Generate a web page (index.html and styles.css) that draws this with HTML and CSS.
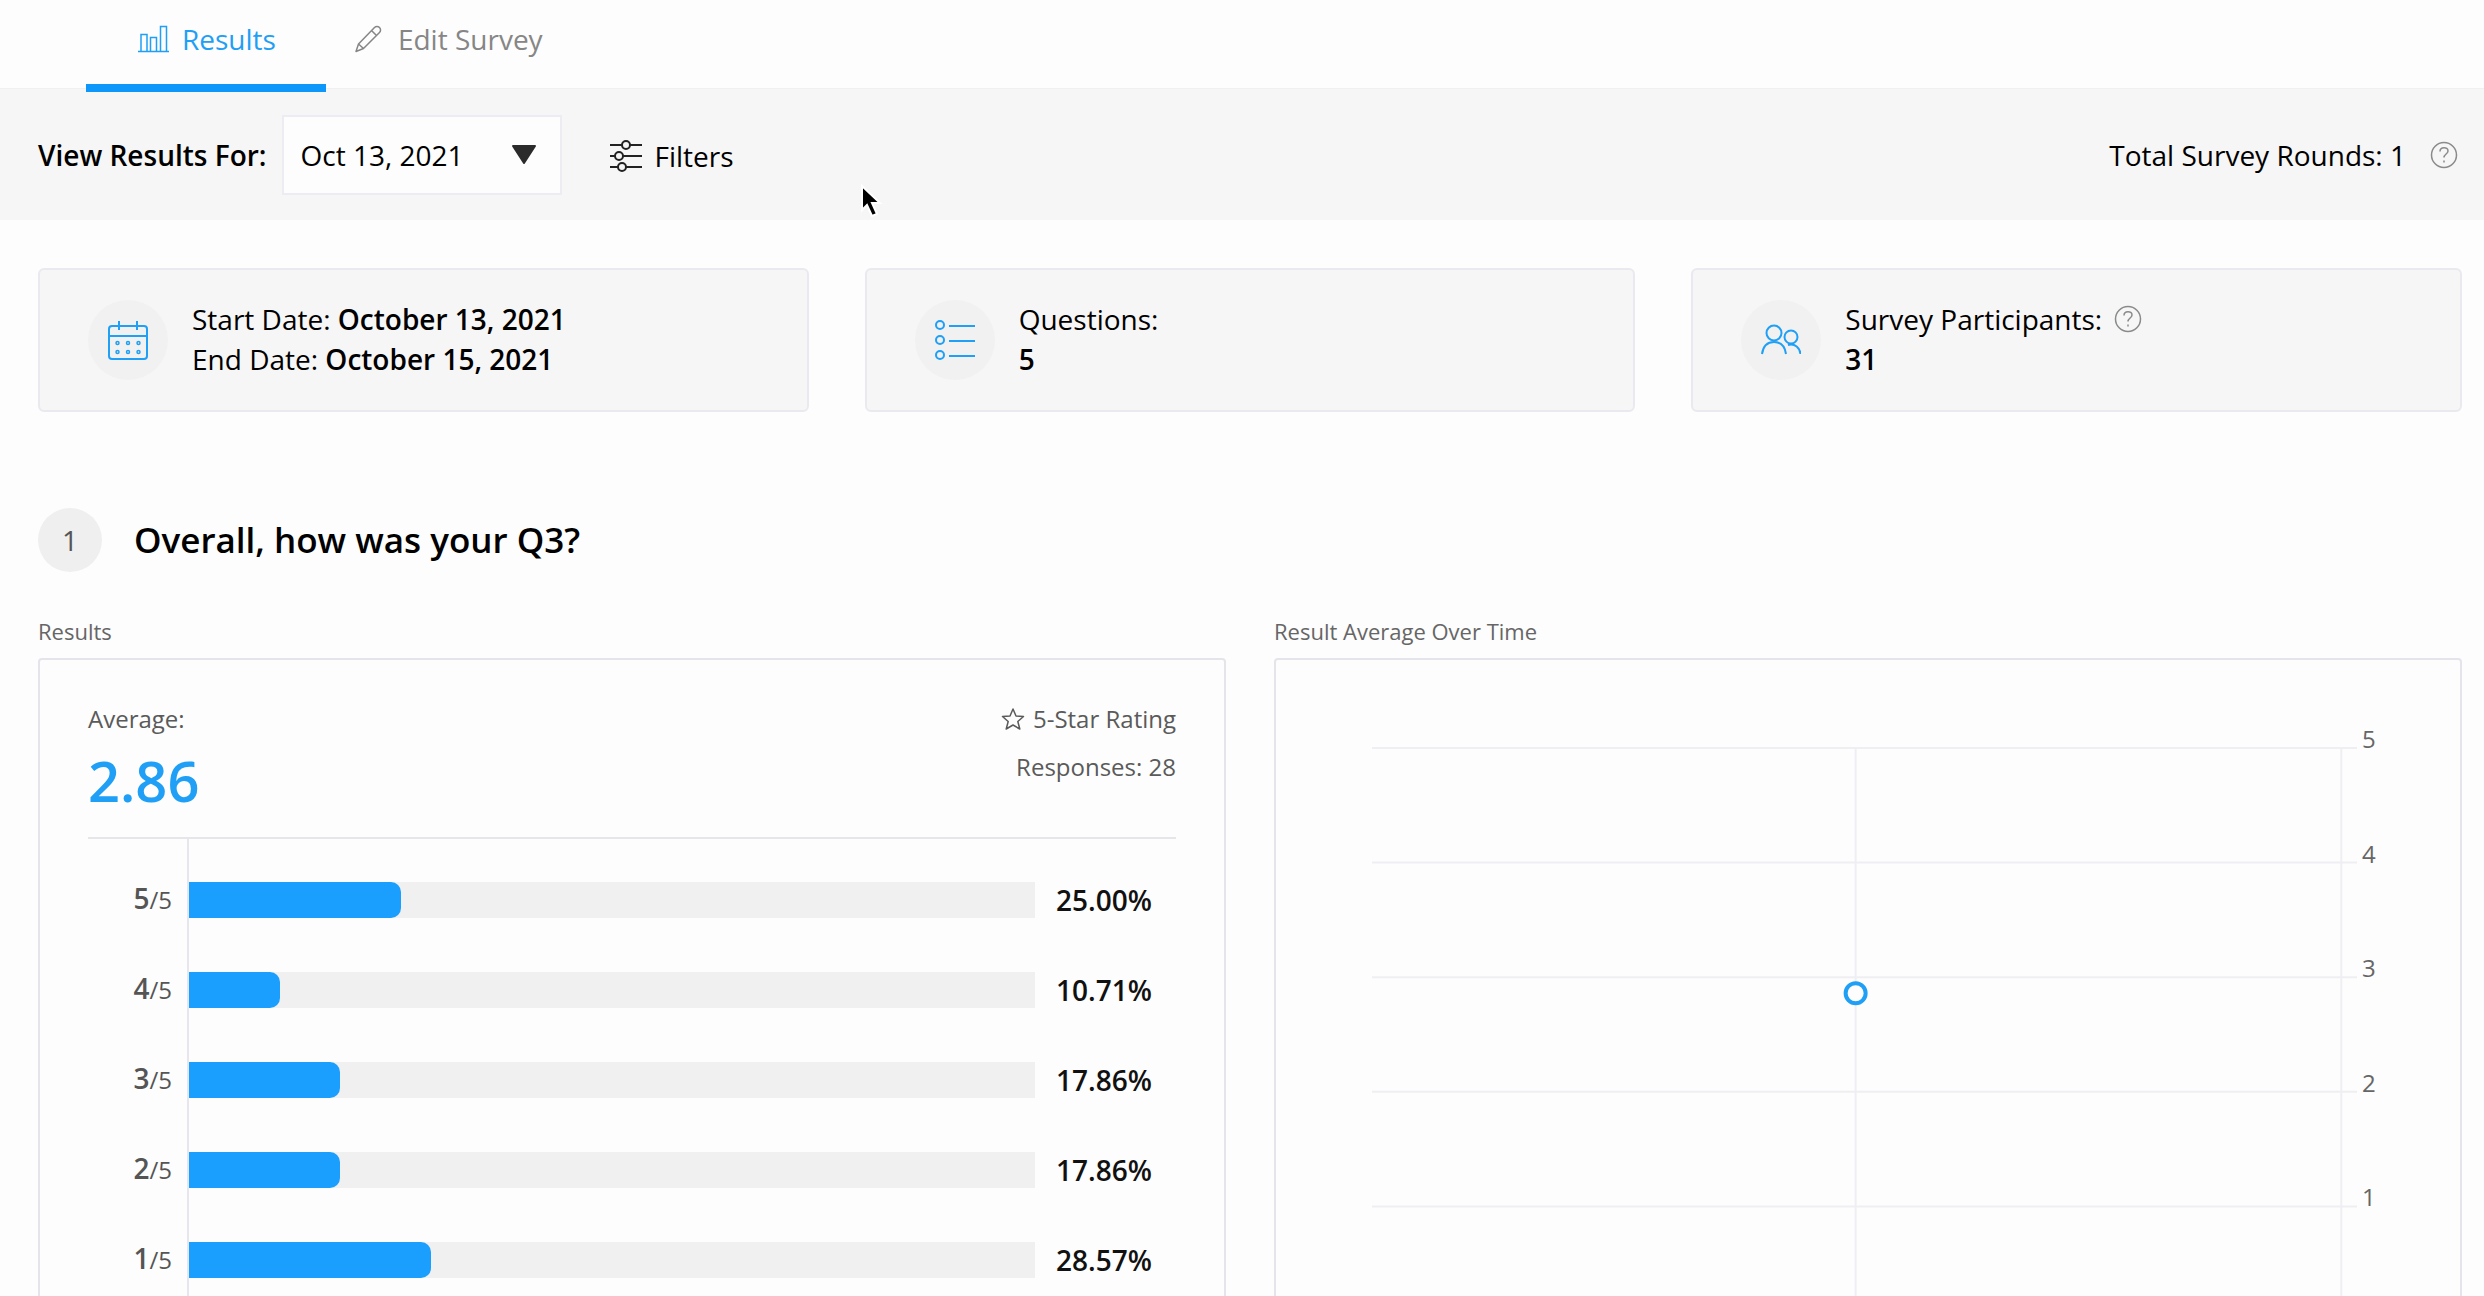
FILE: index.html
```html
<!DOCTYPE html>
<html lang="en">
<head>
    <meta charset="UTF-8">
    <meta name="viewport" content="width=device-width, initial-scale=1.0">
    <title>Survey Results</title>
    <link rel="stylesheet" href="styles.css">
</head>
<body>
    <div class="app">
        <!-- Tabs -->
        <nav class="tabs">
            <a href="#results" class="tab active">
                <svg class="tab-icon" viewBox="0 0 32 28" fill="none" stroke="currentColor" stroke-width="1.5">
                    <path d="M0 26.5h31M3 26V9.500h6V26M12.500 26V12.500h6V26M22.500 26V1.500h6V26"/>
                </svg>
                Results
            </a>
            <a href="#edit" class="tab">
                <svg class="tab-icon" viewBox="0 0 32 28" fill="none" stroke="currentColor" stroke-width="1.5" stroke-linejoin="round">
                    <path d="M2 26.500l2.500-7.500L20.500 2.500a3.500 3.500 0 0 1 5 0a3.500 3.500 0 0 1 0 5L9.500 23.500zM4.500 19l5 4.500M17.500 5.500l5 5"/>
                </svg>
                Edit Survey
            </a>
        </nav>

        <!-- Toolbar -->
        <div class="toolbar">
            <label class="round-label" for="roundSelect">View Results For:</label>
            <div class="select-wrap">
                <select id="roundSelect" class="round-select">
                    <option>Oct 13, 2021</option>
                </select>
                <svg class="select-arrow" viewBox="0 0 26 20">
                    <path d="M2 1h22L13 18z" fill="#2b2b2b" stroke="#2b2b2b" stroke-width="2" stroke-linejoin="round"/>
                </svg>
            </div>
            <button class="filter-button" id="filterButton">
                <svg class="filter-icon" viewBox="0 0 32 32" fill="none" stroke="#222" stroke-width="2">
                    <path d="M0 5h12M20 5h12M0 16h5M13 16h19M0 27h8M16 27h16"/>
                    <circle cx="16" cy="5" r="4"/>
                    <circle cx="9" cy="16" r="4"/>
                    <circle cx="12" cy="27" r="4"/>
                </svg>
                Filters
            </button>
            <div class="total-rounds">
                Total Survey Rounds: 1
                <svg class="help-icon" viewBox="0 0 28 28" fill="none" stroke="#8a8a8a" stroke-width="1.5">
                    <circle cx="14" cy="14" r="12.500"/>
                    <path d="M10 10.500c0-5 8-5 8-.5c0 3-4 3-4 6.500M14 19.500v2"/>
                </svg>
            </div>
        </div>

        <main class="content">
            <!-- Summary cards -->
            <div class="cards">
                <div class="card">
                    <div class="card-icon">
                        <svg viewBox="0 0 40 40" fill="none" stroke="currentColor" stroke-width="2">
                            <rect x="1" y="6" width="38" height="33" rx="3"/>
                            <path d="M1 16h38M11 1v9M29 1v9"/>
                            <g stroke-width="1.5">
                                <circle cx="9.500" cy="23" r="1.500"/>
                                <circle cx="20" cy="23" r="1.500"/>
                                <circle cx="30.500" cy="23" r="1.500"/>
                                <circle cx="9.500" cy="32" r="1.500"/>
                                <circle cx="20" cy="32" r="1.500"/>
                                <circle cx="30.500" cy="32" r="1.500"/>
                            </g>
                        </svg>
                    </div>
                    <div class="card-text">
                        <div>Start Date: <b>October 13, 2021</b></div>
                        <div>End Date: <b>October 15, 2021</b></div>
                    </div>
                </div>
                <div class="card">
                    <div class="card-icon">
                        <svg viewBox="0 0 40 40" fill="none" stroke="currentColor" stroke-width="2">
                            <circle cx="5" cy="5" r="4"/>
                            <circle cx="5" cy="20" r="4"/>
                            <circle cx="5" cy="35" r="4"/>
                            <path d="M14 6h26M14 21h26M14 36h26"/>
                        </svg>
                    </div>
                    <div class="card-text">
                        <div>Questions:</div>
                        <div><b>5</b></div>
                    </div>
                </div>
                <div class="card">
                    <div class="card-icon">
                        <svg viewBox="0 0 40 40" fill="none" stroke="currentColor" stroke-width="2">
                            <circle cx="13" cy="13" r="7.500"/>
                            <path d="M1 34c1-7 5-12 12-12s11 5 12 12"/>
                            <circle cx="30" cy="17" r="6.500"/>
                            <path d="M27 25c7-2 12 3 12.500 9"/>
                        </svg>
                    </div>
                    <div class="card-text">
                        <div class="with-help">
                            Survey Participants:
                            <svg class="help-icon" viewBox="0 0 28 28" fill="none" stroke="#8a8a8a" stroke-width="1.5">
                                <circle cx="14" cy="14" r="12.500"/>
                                <path d="M10 10.500c0-5 8-5 8-.5c0 3-4 3-4 6.500M14 19.500v2"/>
                            </svg>
                        </div>
                        <div><b>31</b></div>
                    </div>
                </div>
            </div>

            <!-- Question 1 -->
            <div class="question">
                <span class="question-number">1</span>
                <h2 class="question-title">Overall, how was your Q3?</h2>
            </div>

            <div class="panels">
                <section class="panel-group">
                    <h3 class="panel-label">Results</h3>
                    <div class="panel results-panel">
                        <div class="results-header">
                            <div>
                                <div class="header-line">Average:</div>
                                <div class="average">2.86</div>
                            </div>
                            <div class="results-meta">
                                <div class="header-line">
                                    <svg class="star-icon" viewBox="0 0 24 24" fill="none" stroke="currentColor" stroke-width="1.5" stroke-linejoin="round">
                                        <path d="M12 2l3 7 7.500.500-5.700 5 2 7.500-6.800-4-6.800 4 2-7.500-5.700-5L9 9z"/>
                                    </svg>
                                    5-Star Rating
                                </div>
                                <div class="header-line">Responses: 28</div>
                            </div>
                        </div>
                        <ul class="bars">
                            <li class="bar-row">
                                <span class="bar-label"><b>5</b>/5</span>
                                <div class="bar-cell"><div class="bar-track"><div class="bar-fill" style="width: 25%"></div></div></div>
                                <span class="bar-value">25.00%</span>
                            </li>
                            <li class="bar-row">
                                <span class="bar-label"><b>4</b>/5</span>
                                <div class="bar-cell"><div class="bar-track"><div class="bar-fill" style="width: 10.71%"></div></div></div>
                                <span class="bar-value">10.71%</span>
                            </li>
                            <li class="bar-row">
                                <span class="bar-label"><b>3</b>/5</span>
                                <div class="bar-cell"><div class="bar-track"><div class="bar-fill" style="width: 17.86%"></div></div></div>
                                <span class="bar-value">17.86%</span>
                            </li>
                            <li class="bar-row">
                                <span class="bar-label"><b>2</b>/5</span>
                                <div class="bar-cell"><div class="bar-track"><div class="bar-fill" style="width: 17.86%"></div></div></div>
                                <span class="bar-value">17.86%</span>
                            </li>
                            <li class="bar-row">
                                <span class="bar-label"><b>1</b>/5</span>
                                <div class="bar-cell"><div class="bar-track"><div class="bar-fill" style="width: 28.57%"></div></div></div>
                                <span class="bar-value">28.57%</span>
                            </li>
                        </ul>
                    </div>
                </section>

                <section class="panel-group">
                    <h3 class="panel-label">Result Average Over Time</h3>
                    <div class="panel chart-panel">
                        <svg class="chart">
                            <g class="chart-grid">
                                <line x1="0" x2="100%" y1="0" y2="0"/>
                                <line x1="0" x2="100%" y1="20%" y2="20%"/>
                                <line x1="0" x2="100%" y1="40%" y2="40%"/>
                                <line x1="0" x2="100%" y1="60%" y2="60%"/>
                                <line x1="0" x2="100%" y1="80%" y2="80%"/>
                                <line x1="0" x2="100%" y1="100%" y2="100%"/>
                                <line x1="49.1%" x2="49.1%" y1="0" y2="100%"/>
                                <line x1="98.4%" x2="98.4%" y1="0" y2="100%"/>
                            </g>
                            <g class="chart-axis">
                                <text x="100%" y="0" dx="5">5</text>
                                <text x="100%" y="20%" dx="5">4</text>
                                <text x="100%" y="40%" dx="5">3</text>
                                <text x="100%" y="60%" dx="5">2</text>
                                <text x="100%" y="80%" dx="5">1</text>
                            </g>
                            <circle class="chart-point" cx="49.1%" cy="42.8%" r="10"/>
                        </svg>
                    </div>
                </section>
            </div>
        </main>

        <!-- Mouse pointer -->
        <svg class="pointer" viewBox="0 0 24 36">
            <path d="M2 2v24l5-5 5 11 5-2-5-11h8z" fill="#000" stroke="#fff" stroke-width="2"/>
        </svg>
    </div>
</body>
</html>
```

FILE: styles.css
```css
* {
    box-sizing: border-box;
}

body {
    margin: 0;
    font-family: "Open Sans", "Noto Sans", sans-serif;
    font-size: 28px;
    line-height: 40px;
    color: #000;
    background-color: #fdfdfd;
}

b {
    font-weight: 600;
}

.app {
    position: relative;
    height: 100vh;
    overflow: hidden;
}

.tabs {
    display: flex;
    height: 88px;
    padding-left: 86px;
}

.tab {
    display: flex;
    align-items: center;
    gap: 12px;
    height: 92px;
    padding: 0 28px 6px;
    border-bottom: 8px solid transparent;
    color: #868686;
    text-decoration: none;
    z-index: 1;
}

.tab.active {
    padding-left: 52px;
    padding-right: 50px;
    color: #1f9ff5;
    border-bottom-color: #0d97fa;
}

.tab-icon {
    width: 32px;
    height: 28px;
}

.toolbar {
    display: flex;
    align-items: center;
    height: 132px;
    padding: 0 26px 0 38px;
    background-color: #f6f6f6;
    border-top: 1px solid #f0f0f0;
}

.round-label {
    font-weight: 600;
    margin-right: 16px;
}

.select-wrap {
    position: relative;
}

.round-select {
    appearance: none;
    width: 280px;
    height: 80px;
    padding: 0 16px;
    border: 2px solid #ececf2;
    background-color: #fdfdfd;
    color: #000;
    font: inherit;
}

.select-arrow {
    position: absolute;
    right: 24px;
    top: 30px;
    width: 28px;
    height: 20px;
    pointer-events: none;
}

.filter-button {
    display: flex;
    align-items: center;
    gap: 12px;
    margin-left: 48px;
    padding: 2px 0 0;
    border: none;
    background: none;
    color: #000;
    font: inherit;
    cursor: pointer;
}

.filter-icon {
    width: 32px;
    height: 32px;
}

.total-rounds {
    display: flex;
    align-items: center;
    gap: 24px;
    margin-left: auto;
}

.help-icon {
    width: 28px;
    height: 28px;
}

.content {
    padding: 48px 22px 48px 38px;
}

.cards {
    display: grid;
    grid-template-columns: repeat(3, 1fr);
    gap: 56px;
}

.card {
    display: flex;
    align-items: center;
    gap: 24px;
    height: 144px;
    padding: 0 48px;
    border: 2px solid #e9e9ef;
    border-radius: 6px;
    background-color: #f6f6f6;
}

.card-icon {
    display: flex;
    align-items: center;
    justify-content: center;
    width: 80px;
    height: 80px;
    border-radius: 50%;
    background-color: #f1f1f1;
    color: #1f9ff5;
}

.card-icon svg {
    width: 40px;
    height: 40px;
}

.card-text {
    padding-bottom: 2px;
}

.with-help {
    display: flex;
    align-items: center;
    gap: 12px;
}

.question {
    display: flex;
    align-items: center;
    gap: 32px;
    margin-top: 96px;
}

.question-number {
    width: 64px;
    border-radius: 50%;
    background-color: #efefef;
    color: #555;
    line-height: 64px;
    text-align: center;
}

.question-title {
    margin: 0;
    font-size: 35px;
    font-weight: 600;
}

.panels {
    display: grid;
    grid-template-columns: 1fr 1fr;
    gap: 48px;
    margin-top: 43px;
}

.panel-group {
    display: flex;
    flex-direction: column;
}

.panel-label {
    margin: 0 0 11px;
    color: #666;
    font-size: 22px;
    font-weight: 400;
    line-height: 32px;
}

.panel {
    flex: 1;
    min-height: 760px;
    border: 2px solid #e4e4ea;
    border-radius: 4px;
}

.results-panel {
    display: flex;
    flex-direction: column;
    padding: 35px 48px 0;
}

.results-header {
    display: flex;
    justify-content: space-between;
    padding-bottom: 20px;
    border-bottom: 2px solid #e6e6ea;
}

.header-line {
    color: #5a5a5a;
    font-size: 24px;
    line-height: 48px;
}

.average {
    color: #1f9ff5;
    font-size: 56px;
    font-weight: 600;
    line-height: 74px;
}

.results-meta {
    display: flex;
    flex-direction: column;
    align-items: flex-end;
}

.results-meta .header-line {
    display: flex;
    align-items: center;
    gap: 8px;
}

.star-icon {
    width: 24px;
    height: 24px;
}

.bars {
    margin: 0;
    padding: 0;
    list-style: none;
}

.bar-row {
    display: grid;
    grid-template-columns: 99px 1fr 141px;
    line-height: 90px;
}

/* the axis line reaches up to the header divider */
.bar-row:first-child > * {
    padding-top: 16px;
}

.bar-label {
    padding-right: 15px;
    color: #555;
    font-size: 24px;
    text-align: right;
}

.bar-label b {
    font-size: 28px;
    line-height: 28px;
}

.bar-cell {
    display: flex;
    align-items: center;
    border-left: 2px solid #e6e6ec;
}

.bar-track {
    flex: 1;
    height: 36px;
    background-color: #f0f0f0;
}

.bar-fill {
    height: 100%;
    border-radius: 0 10px 10px 0;
    background-color: #1b9fff;
}

.bar-value {
    padding-left: 21px;
    color: #111;
    font-weight: 600;
}

.chart-panel {
    padding: 88px 103px 0 96px;
}

.chart {
    display: block;
    width: 100%;
    height: 573px;
    overflow: visible;
}

.chart-grid line {
    stroke: #efeff3;
    stroke-width: 2;
}

.chart-axis text {
    fill: #666;
    font-size: 24px;
}

.chart-point {
    fill: #fdfdfd;
    stroke: #1f9ff5;
    stroke-width: 4;
}

.pointer {
    position: absolute;
    left: 860px;
    top: 184px;
    width: 24px;
    height: 36px;
}
```
